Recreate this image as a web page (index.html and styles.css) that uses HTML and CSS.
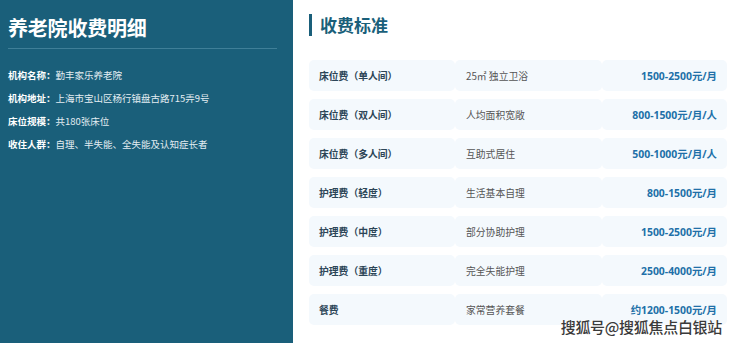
FILE: index.html
```html
<!DOCTYPE html>
<html lang="zh-CN">
<head>
<meta charset="utf-8">
<title>养老院收费明细</title>
<link rel="stylesheet" href="styles.css">
</head>
<body>
<div class="page">
  <aside class="info">
    <h1 class="info-title">养老院收费明细</h1>
    <ul class="info-list">
      <li><b>机构名称：</b>勤丰家乐养老院</li>
      <li><b>机构地址：</b>上海市宝山区杨行镇盘古路715弄9号</li>
      <li><b>床位规模：</b>共180张床位</li>
      <li><b>收住人群：</b>自理、半失能、全失能及认知症长者</li>
    </ul>
  </aside>
  <main class="fees">
    <h2 class="fees-title">收费标准</h2>
    <table class="fee-table">
      <tr><td class="c-name">床位费（单人间）</td><td class="c-desc">25㎡ 独立卫浴</td><td class="c-price">1500-2500元/月</td></tr>
      <tr><td class="c-name">床位费（双人间）</td><td class="c-desc">人均面积宽敞</td><td class="c-price">800-1500元/月/人</td></tr>
      <tr><td class="c-name">床位费（多人间）</td><td class="c-desc">互助式居住</td><td class="c-price">500-1000元/月/人</td></tr>
      <tr><td class="c-name">护理费（轻度）</td><td class="c-desc">生活基本自理</td><td class="c-price">800-1500元/月</td></tr>
      <tr><td class="c-name">护理费（中度）</td><td class="c-desc">部分协助护理</td><td class="c-price">1500-2500元/月</td></tr>
      <tr><td class="c-name">护理费（重度）</td><td class="c-desc">完全失能护理</td><td class="c-price">2500-4000元/月</td></tr>
      <tr><td class="c-name">餐费</td><td class="c-desc">家常营养套餐</td><td class="c-price">约1200-1500元/月</td></tr>
    </table>
  </main>
  <div class="watermark">搜狐号@搜狐焦点白银站</div>
</div>
</body>
</html>
```

FILE: styles.css
```css
* { box-sizing: border-box; }
html, body { margin: 0; padding: 0; background: #fff; }
body {
  font-family: "Open Sans", "Noto Sans CJK SC", sans-serif;
  width: 740px;
  height: 343px;
  overflow: hidden;
}
.page {
  position: relative;
  display: flex;
  height: 343px;
}
.info {
  width: 293px;
  flex: none;
  background: #1a5f7a;
  color: #fff;
  padding: 14px 16px 0 8px;
}
.info-title {
  margin: 0;
  font-family: "Noto Sans CJK SC", sans-serif;
  font-size: 20px;
  font-weight: 700;
  line-height: 28px;
  padding-bottom: 6px;
  border-bottom: 1px solid #3f7f98;
  letter-spacing: -0.2px;
}
.info-list {
  list-style: none;
  margin: 15px 0 0;
  padding: 0;
  font-family: "Noto Sans CJK SC", sans-serif;
  font-size: 9.5px;
  color: #e3edf2;
}
.info-list li {
  line-height: 23px;
}
.info-list b {
  color: #fff;
  font-weight: 700;
}
.fees {
  flex: 1;
  padding: 14px 13px 0 16px;
}
.fees-title {
  margin: 0 0 16px;
  border-left: 3px solid #1a5f7a;
  padding-left: 8px;
  font-family: "Noto Sans CJK SC", sans-serif;
  font-size: 17px;
  font-weight: 700;
  line-height: 22px;
  color: #1a5f7a;
}
.fee-table {
  width: 418px;
  border-collapse: separate;
  border-spacing: 0 8px;
  font-size: 9.8px;
  font-family: "Noto Sans CJK SC", sans-serif;
  table-layout: fixed;
}
.fee-table td {
  height: 31px;
  padding: 0 10px;
  background: #f4f9fd;
  border-radius: 5px;
  vertical-align: middle;
  white-space: nowrap;
}
.c-name {
  width: 146px;
  font-weight: 700;
  color: #2c4557;
}
.c-desc {
  width: 147px;
  padding-left: 11px !important;
  color: #555;
}
.c-price {
  width: 125px;
  text-align: right;
  font-family: "Open Sans", "Noto Sans CJK SC", sans-serif;
  font-size: 10.4px;
  font-weight: 700;
  color: #2170a8;
}
.watermark {
  position: absolute;
  right: 18px;
  bottom: 6px;
  font-family: "Noto Sans CJK SC", sans-serif;
  font-size: 15px;
  font-weight: 500;
  color: #3a3a3a;
  text-shadow: 0 0 2px #fff, 0 0 1px #fff;
  letter-spacing: -0.3px;
}
```
